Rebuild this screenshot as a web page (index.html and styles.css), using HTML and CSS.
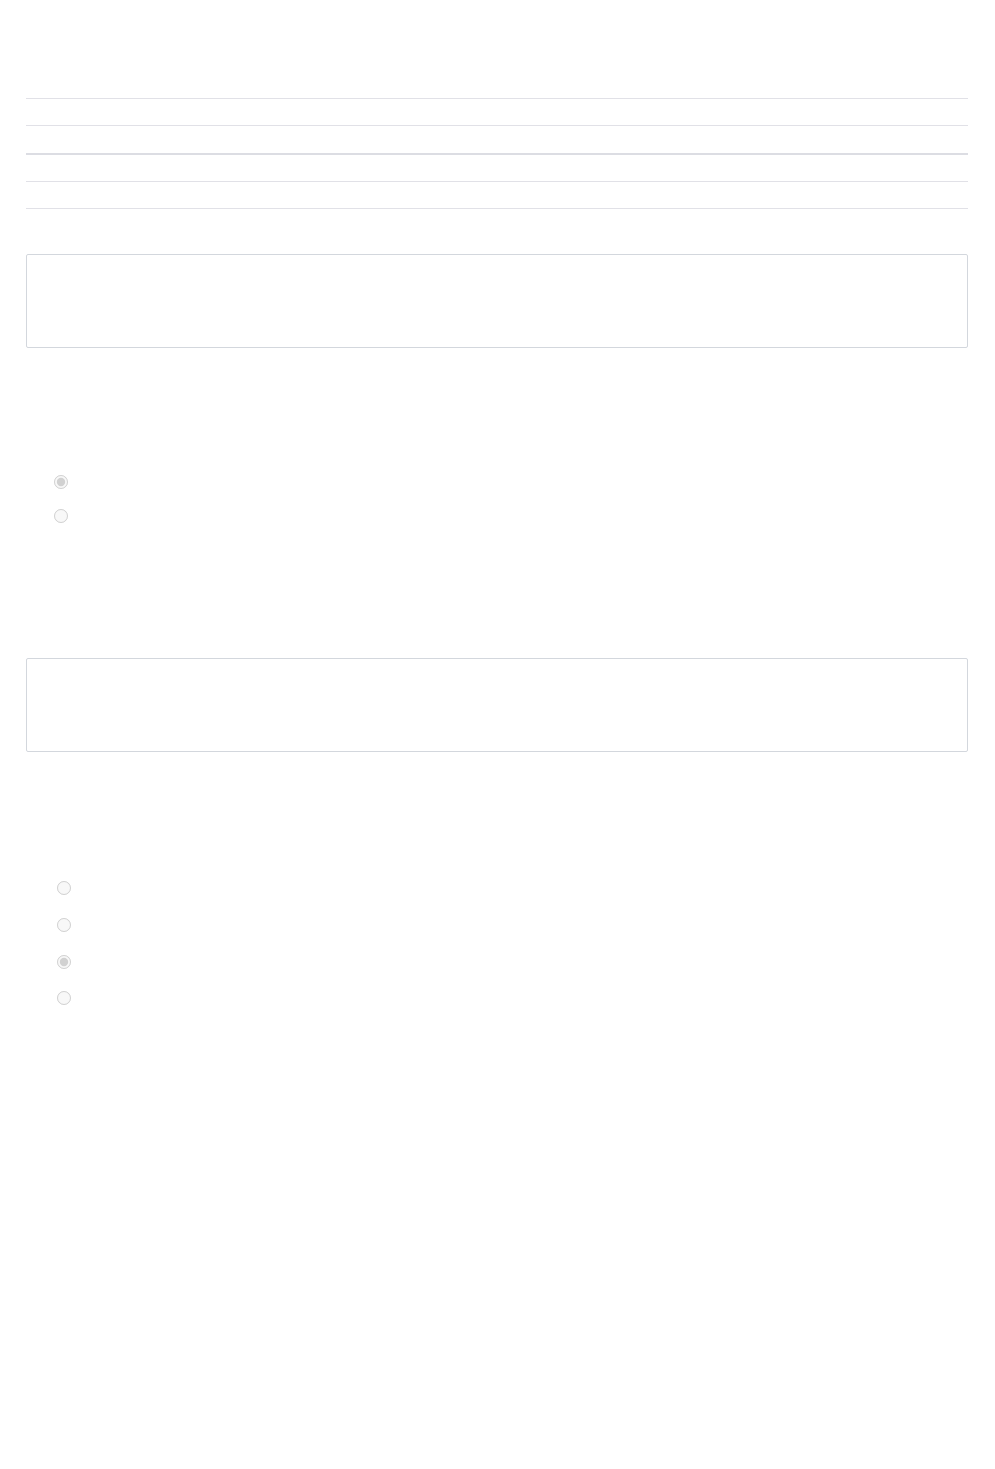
FILE: index.html
```html
<!DOCTYPE html>
<html>
<head>
  <title>Survey</title>
  <link rel="stylesheet" href="styles.css">
</head>
<body>
  <div class="page">
    <div class="grid">
      <div class="grid-row"></div>
      <div class="grid-row grid-row-wide"></div>
      <div class="grid-row grid-head"></div>
      <div class="grid-row"></div>
      <div class="grid-row grid-end"></div>
    </div>

    <textarea class="answer" disabled></textarea>

    <div class="options options-first">
      <label class="option"><input type="radio" name="q1" checked disabled></label>
      <label class="option"><input type="radio" name="q1" disabled></label>
    </div>

    <textarea class="answer answer-second" disabled></textarea>

    <div class="options options-second">
      <label class="option"><input type="radio" name="q2" disabled></label>
      <label class="option"><input type="radio" name="q2" disabled></label>
      <label class="option"><input type="radio" name="q2" checked disabled></label>
      <label class="option"><input type="radio" name="q2" disabled></label>
    </div>
  </div>
</body>
</html>
```

FILE: styles.css
```css
html, body { margin: 0; background: #fff; }
body { font-family: "Open Sans", "Liberation Sans", sans-serif; font-size: 14px; color: #333; }
.page { padding: 98px 27px 400px 26px; display: flex; flex-direction: column; }

.grid { display: flex; flex-direction: column; }
.grid-row { box-sizing: border-box; height: 27px; border-top: 1px solid #e1e1e7; }
.grid-row-wide { height: 28px; }
.grid-head { height: 28px; border-top: 2px solid #dcdde3; }
.grid-end { height: 1px; }

.answer { box-sizing: border-box; display: block; width: 100%; height: 94px; margin: 45px 0 0; padding: 8px; border: 1px solid #d3d7dd; border-radius: 2px; background: #fff; resize: none; }
.answer-second { margin-top: 125px; }

.options { display: flex; flex-direction: column; }
.options-first { margin-top: 117px; padding-left: 28px; }
.options-second { margin-top: 118px; padding-left: 31px; }
.option { display: flex; align-items: center; height: 34px; }
.options-second .option { height: 36.67px; }
.option input { margin: 0; width: 14px; height: 14px; }
```
